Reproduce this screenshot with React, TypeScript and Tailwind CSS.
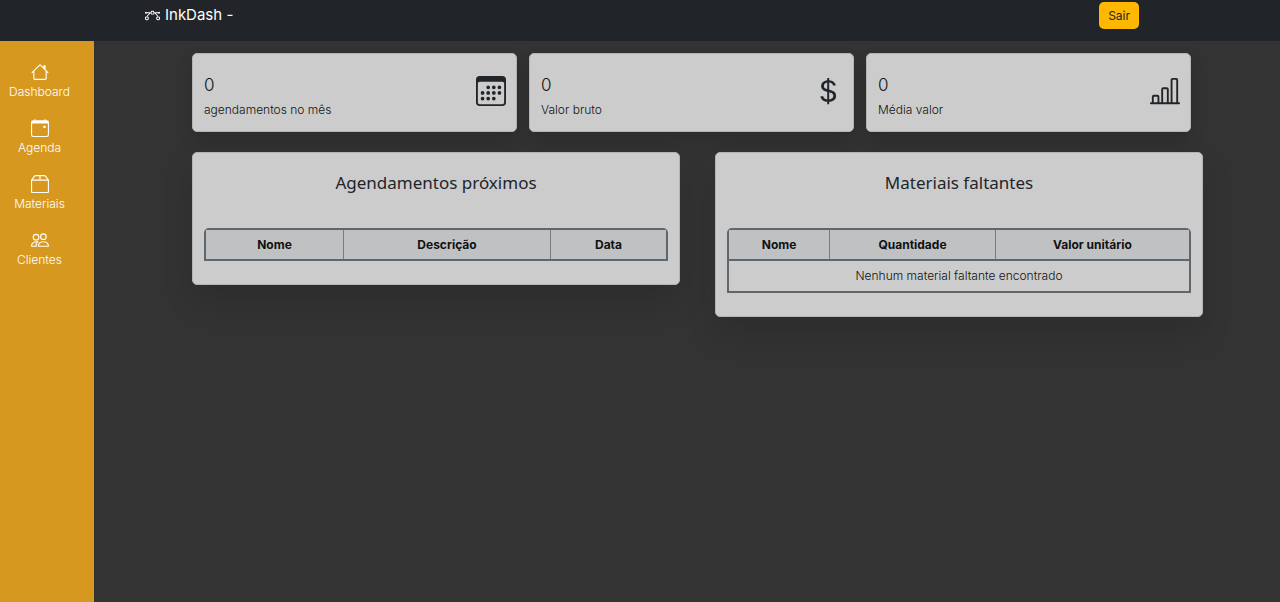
import type { ReactNode } from "react";
import type { IconType } from "react-icons";
import {
  BsBarChartLine,
  BsBezier,
  BsBox2,
  BsCalendar3,
  BsCalendarEvent,
  BsCurrencyDollar,
  BsHouse,
  BsPeople,
} from "react-icons/bs";

type NavItem = { label: string; icon: IconType };
type Stat = { value: string; label: string; icon: IconType };
type Column = { label: string; width: string };

const navItems: NavItem[] = [
  { label: "Dashboard", icon: BsHouse },
  { label: "Agenda", icon: BsCalendarEvent },
  { label: "Materiais", icon: BsBox2 },
  { label: "Clientes", icon: BsPeople },
];

const stats: Stat[] = [
  { value: "0", label: "agendamentos no mês", icon: BsCalendar3 },
  { value: "0", label: "Valor bruto", icon: BsCurrencyDollar },
  { value: "0", label: "Média valor", icon: BsBarChartLine },
];

const appointmentColumns: Column[] = [
  { label: "Nome", width: "w-[30%]" },
  { label: "Descrição", width: "w-[45%]" },
  { label: "Data", width: "w-[25%]" },
];

const materialColumns: Column[] = [
  { label: "Nome", width: "w-[22%]" },
  { label: "Quantidade", width: "w-[36%]" },
  { label: "Valor unitário", width: "w-[42%]" },
];

function StatCard({ value, label, icon: Icon }: Stat) {
  return (
    <div className="flex items-start justify-between rounded-[5px] border border-[#b4b4b4] bg-[#cccccc] pt-[15px] pr-[10px] pb-3 pl-[11px] shadow-[0_8px_16px_rgba(0,0,0,0.15)]">
      <div className="font-light text-[#111111]">
        <p className="text-[17px] leading-8">{value}</p>
        <p className="text-xs leading-[18px]">{label}</p>
      </div>
      <Icon className="mt-[7px] size-[30px]" aria-hidden="true" />
    </div>
  );
}

function Panel({ title, columns, children }: { title: string; columns: Column[]; children?: ReactNode }) {
  return (
    <section className="rounded-[5px] border border-[#b4b4b4] bg-[#cccccc] px-[11px] pt-4 pb-[23px] shadow-[0_16px_32px_rgba(0,0,0,0.12)]">
      <h2 className="mb-[31px] text-center font-['Noto_Sans',sans-serif] text-[17px] leading-7">{title}</h2>
      <table className="w-full table-fixed border-separate border-spacing-0 rounded-t-[5px] border-2 border-[#60676c] text-center text-xs text-[#111111]">
        <thead>
          <tr>
            {columns.map((column) => (
              <th
                key={column.label}
                scope="col"
                className={`${column.width} h-[29px] border-r border-[#777d81] bg-[#bfc1c3] font-bold last:border-r-0`}
              >
                {column.label}
              </th>
            ))}
          </tr>
        </thead>
        {children && <tbody>{children}</tbody>}
      </table>
    </section>
  );
}

export default function App() {
  return (
    <div className="flex min-h-screen flex-col bg-[#333333] font-['Inter',sans-serif] text-[#212529]">
      <header className="flex items-start justify-between bg-[#212529] pt-[2px] pr-[141px] pb-3 pl-[145px]">
        <a href="#" className="flex items-center gap-[5px] text-[15px] leading-[26px] text-white">
          <BsBezier className="size-[15px]" aria-hidden="true" />
          InkDash -
        </a>
        <button type="button" className="h-[27px] rounded-[5px] bg-[#ffb802] px-[9px] text-xs">
          Sair
        </button>
      </header>
      <div className="flex flex-1">
        <nav aria-label="Principal" className="w-[94px] shrink-0 bg-[#d7981f] pt-[22px] pr-[15px]">
          <ul className="flex flex-col gap-[18px]">
            {navItems.map(({ label, icon: Icon }) => (
              <li key={label}>
                <a href="#" className="flex flex-col items-center gap-[2px] text-xs leading-[18px] font-light text-white">
                  <Icon className="size-[18px]" aria-hidden="true" />
                  {label}
                </a>
              </li>
            ))}
          </ul>
        </nav>
        <main className="flex-1 pt-3 pr-[77px] pl-[98px]">
          <div className="mr-3 grid grid-cols-3 gap-3">
            {stats.map((stat) => (
              <StatCard key={stat.label} {...stat} />
            ))}
          </div>
          <div className="mt-5 grid grid-cols-2 items-start gap-[35px]">
            <Panel title="Agendamentos próximos" columns={appointmentColumns} />
            <Panel title="Materiais faltantes" columns={materialColumns}>
              <tr>
                <td colSpan={3} className="h-8 border-t-2 border-[#60676c] font-light">
                  Nenhum material faltante encontrado
                </td>
              </tr>
            </Panel>
          </div>
        </main>
      </div>
    </div>
  );
}
